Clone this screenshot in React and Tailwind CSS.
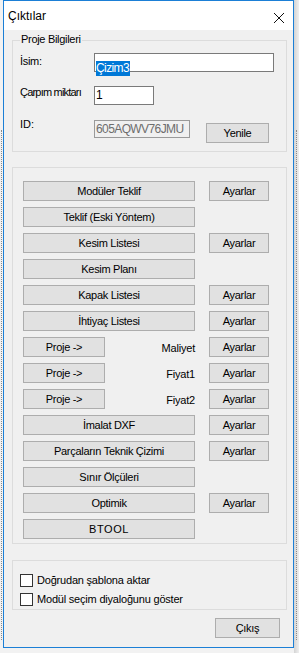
const font = "font-['Liberation_Sans',Arial,sans-serif]";

const Btn = ({ children, className = "" }) => (
  <div
    className={`h-[20px] flex items-center justify-center bg-[#e1e1e1] border border-[#adadad] text-[11px] leading-[13px] tracking-[-0.3px] text-black ${className}`}
  >
    {children}
  </div>
);

const rows = [
  { label: "Modüler Teklif", ayar: true },
  { label: "Teklif (Eski Yöntem)" },
  { label: "Kesim Listesi", ayar: true },
  { label: "Kesim Planı" },
  { label: "Kapak Listesi", ayar: true },
  { label: "İhtiyaç Listesi", ayar: true },
  { proje: "Maliyet", ayar: true },
  { proje: "Fiyat1", ayar: true },
  { proje: "Fiyat2", ayar: true },
  { label: "İmalat DXF", ayar: true },
  { label: "Parçaların Teknik Çizimi", ayar: true },
  { label: "Sınır Ölçüleri" },
  { label: "Optimik", ayar: true },
  { label: "BTOOL", wide: true },
];

const Check = ({ label }) => (
  <div className="flex items-center h-[13px] gap-[4px]">
    <div className="w-[13px] h-[13px] border border-[#333333] bg-white shrink-0" />
    <span className="text-[11px] leading-[13px] tracking-[-0.2px] text-black">{label}</span>
  </div>
);

export default function App() {
  return (
    <div className={`w-[299px] h-[653px] flex bg-[#f2f2f2] overflow-hidden ${font}`}>
      {/* left strip */}
      <div className="w-[3px] shrink-0 pt-[130px]">
        <div className="ml-[1px] h-[510px] border-l border-dotted border-[#8a8a8a]" />
      </div>

      {/* dialog window */}
      <div className="w-[291px] h-[648px] shrink-0 border border-[#1b7fd6] bg-[#f0f0f0] flex flex-col">
        {/* title bar */}
        <div className="h-[29px] bg-white flex items-start justify-between">
          <span className="mt-[8px] pl-[4px] text-[12px] leading-[14px] text-black">Çıktılar</span>
          <svg className="mt-[11px] mr-[8px]" width="12" height="12" viewBox="0 0 12 12">
            <path d="M1 1L11 11M11 1L1 11" stroke="#111" strokeWidth="1" />
          </svg>
        </div>

        {/* Proje Bilgileri */}
        <div className="relative mt-[10px] ml-[8px] w-[275px] h-[112px] border border-[#dcdcdc] pt-[12px] pl-[7px]">
          <span className="absolute top-[-8px] left-[7px] px-[1px] bg-[#f0f0f0] text-[11px] leading-[13px] tracking-[-0.3px] text-black">
            Proje Bilgileri
          </span>

          <div className="flex items-start h-[19px]">
            <span className="w-[74px] mt-[2px] text-[11px] leading-[13px] tracking-[-0.3px]">İsim:</span>
            <div className="w-[180px] h-[19px] border border-[#7a7a7a] bg-white pl-[1px] pt-[1px]">
              <span className="inline-block bg-[#0078d7] text-white text-[12px] leading-[15px] tracking-[-0.6px] pr-[1px]">
                Çizim3
              </span>
            </div>
          </div>

          <div className="flex items-start h-[19px] mt-[14px]">
            <span className="w-[74px] text-[11px] leading-[13px] tracking-[-0.8px] whitespace-nowrap">Çarpım miktarı</span>
            <div className="w-[60px] h-[19px] border border-[#7a7a7a] bg-white pl-[1px] pt-[1px] text-[12px] leading-[15px]">
              1
            </div>
          </div>

          <div className="flex items-start h-[20px] mt-[13px]">
            <span className="w-[74px] text-[11px] leading-[13px]">ID:</span>
            <div className="mt-[2px] w-[96px] h-[18px] border border-[#9a9a9a] bg-[#f0f0f0] pl-[1px] text-[12px] leading-[16px] tracking-[-0.6px] text-[#6d6d6d]">
              605AQWV76JMU
            </div>
            <Btn className="ml-[16px] mt-[5px] w-[63px] h-[17px]">Yenile</Btn>
          </div>
        </div>

        {/* buttons group */}
        <div className="mt-[15px] ml-[8px] w-[275px] h-[377px] border border-[#dcdcdc] pt-[13px] pl-[10px] flex flex-col gap-[6px]">
          {rows.map((r, i) => (
            <div key={i} className="flex items-center gap-[14px]">
              {r.proje ? (
                <div className="w-[172px] flex items-center">
                  <Btn className="w-[82px]">Proje -&gt;</Btn>
                  <span className="flex-1 text-right pt-[2px] text-[11px] leading-[13px] tracking-[-0.2px] text-black">
                    {r.proje}
                  </span>
                </div>
              ) : (
                <Btn className={r.wide ? "w-[172px] tracking-[0.6px]" : "w-[172px]"}>{r.label}</Btn>
              )}
              {r.ayar && <Btn className="w-[60px]">Ayarlar</Btn>}
            </div>
          ))}
        </div>

        {/* options group */}
        <div className="mt-[16px] ml-[8px] w-[275px] h-[50px] border border-[#dcdcdc] pt-[13px] pl-[7px] flex flex-col gap-[6px]">
          <Check label="Doğrudan şablona aktar" />
          <Check label="Modül seçim diyaloğunu göster" />
        </div>

        <div className="mt-[8px] ml-[211px]">
          <Btn className="w-[65px]">Çıkış</Btn>
        </div>
      </div>

      {/* right strip */}
      <div className="w-[5px] shrink-0 bg-gradient-to-r from-[#d4d4d4] to-[#efefef] pt-[130px]">
        <div className="ml-[2px] h-[510px] border-l border-dotted border-[#8a8a8a]" />
      </div>
    </div>
  );
}
